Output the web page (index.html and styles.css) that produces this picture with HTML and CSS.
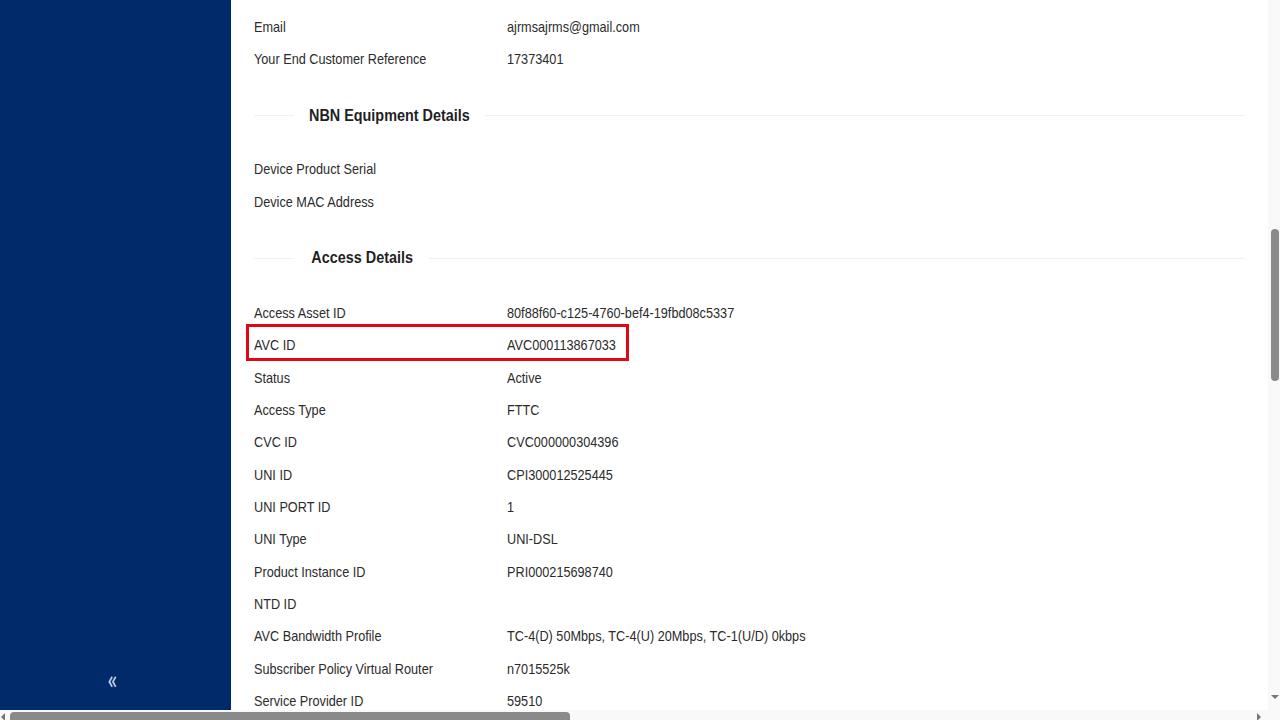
FILE: index.html
```html
<!DOCTYPE html>
<html lang="en">
<head>
<meta charset="utf-8">
<title>Service Details</title>
<link rel="stylesheet" href="styles.css">
</head>
<body>
<div class="app">
  <div class="frame">
    <aside class="sidebar">
      <div class="collapse">«</div>
    </aside>
    <main class="main">
      <div class="content">
        <div class="row"><span class="label"><span class="t">Email</span></span><span class="value"><span class="t">ajrmsajrms@gmail.com</span></span></div>
        <div class="row"><span class="label"><span class="t">Your End Customer Reference</span></span><span class="value"><span class="t">17373401</span></span></div>

        <div class="divider"><h2 class="divider-text"><span class="ht">NBN Equipment Details</span></h2></div>

        <div class="row"><span class="label"><span class="t">Device Product Serial</span></span><span class="value"></span></div>
        <div class="row"><span class="label"><span class="t">Device MAC Address</span></span><span class="value"></span></div>

        <div class="divider second"><h2 class="divider-text"><span class="ht">Access Details</span></h2></div>

        <div class="row"><span class="label"><span class="t">Access Asset ID</span></span><span class="value"><span class="t">80f88f60-c125-4760-bef4-19fbd08c5337</span></span></div>
        <div class="row highlighted"><span class="label"><span class="t">AVC ID</span></span><span class="value"><span class="t">AVC000113867033</span></span></div>
        <div class="row"><span class="label"><span class="t">Status</span></span><span class="value"><span class="t">Active</span></span></div>
        <div class="row"><span class="label"><span class="t">Access Type</span></span><span class="value"><span class="t">FTTC</span></span></div>
        <div class="row"><span class="label"><span class="t">CVC ID</span></span><span class="value"><span class="t">CVC000000304396</span></span></div>
        <div class="row"><span class="label"><span class="t">UNI ID</span></span><span class="value"><span class="t">CPI300012525445</span></span></div>
        <div class="row"><span class="label"><span class="t">UNI PORT ID</span></span><span class="value"><span class="t">1</span></span></div>
        <div class="row"><span class="label"><span class="t">UNI Type</span></span><span class="value"><span class="t">UNI-DSL</span></span></div>
        <div class="row"><span class="label"><span class="t">Product Instance ID</span></span><span class="value"><span class="t">PRI000215698740</span></span></div>
        <div class="row"><span class="label"><span class="t">NTD ID</span></span><span class="value"></span></div>
        <div class="row"><span class="label"><span class="t">AVC Bandwidth Profile</span></span><span class="value"><span class="t">TC-4(D) 50Mbps, TC-4(U) 20Mbps, TC-1(U/D) 0kbps</span></span></div>
        <div class="row"><span class="label"><span class="t">Subscriber Policy Virtual Router</span></span><span class="value"><span class="t">n7015525k</span></span></div>
        <div class="row"><span class="label"><span class="t">Service Provider ID</span></span><span class="value"><span class="t">59510</span></span></div>
      </div>
    </main>
    <div class="vscroll">
      <div class="vthumb"></div>
      <div class="arrow-down"></div>
    </div>
  </div>
  <div class="hscroll">
    <div class="arrow-left"></div>
    <div class="hthumb"></div>
    <div class="arrow-right"></div>
  </div>
</div>
</body>
</html>
```

FILE: styles.css
```css
html, body {
  margin: 0;
  padding: 0;
  background: #ffffff;
}

.app {
  width: 1280px;
  height: 720px;
  display: flex;
  flex-direction: column;
  overflow: hidden;
  font-family: "Liberation Sans", Arial, sans-serif;
  color: #2b2b2b;
}

.frame {
  flex: 1;
  display: flex;
  min-height: 0;
}

.sidebar {
  width: 231px;
  flex: none;
  background: #002a6a;
  display: flex;
  flex-direction: column;
  justify-content: flex-end;
  align-items: center;
  padding-bottom: 19px;
  box-sizing: border-box;
}

.collapse {
  color: #c9d3ea;
  font-family: Lato, sans-serif;
  font-size: 24px;
  line-height: 24px;
  margin-left: -6px;
  transform: scaleY(1.15);
}

.main {
  flex: 1;
  min-width: 0;
  overflow: hidden;
  background: #ffffff;
}

.content {
  padding: 10px 0 0 23px;
  width: 991px;
}

.row {
  display: flex;
  height: 32.33px;
  align-items: center;
  font-size: 15px;
  position: relative;
}

.label {
  width: 253px;
  flex: none;
}

.value {
  flex: 1;
}

.t {
  display: inline-block;
  white-space: nowrap;
  transform: scaleX(0.846);
  transform-origin: left center;
}

.row.highlighted::after {
  content: "";
  position: absolute;
  left: -8px;
  top: -5px;
  width: 377px;
  height: 31px;
  border: 3px solid #e30613;
}

.divider {
  display: flex;
  align-items: center;
  height: 32px;
  margin: 25px 0 21px;
  background: linear-gradient(#f0f0f0, #f0f0f0) no-repeat 0 50% / 100% 1px;
}

.divider.second {
  margin-bottom: 22px;
}

.divider-text {
  margin: 0 0 0 40px;
  font-size: 17px;
  font-weight: bold;
  color: #1f1f1f;
  line-height: 32px;
}

.ht {
  display: inline-block;
  white-space: nowrap;
  background: #ffffff;
  padding: 0 18px 0 17.7px;
  transform: scaleX(0.847);
  transform-origin: left center;
}

.second .ht {
  padding-left: 20.5px;
}

.vscroll {
  width: 12px;
  flex: none;
  background: #f9f9f9;
  position: relative;
}

.vthumb {
  position: absolute;
  left: 3px;
  top: 229px;
  width: 8px;
  height: 152px;
  border-radius: 4px;
  background: #8a8a8a;
}

.arrow-down {
  position: absolute;
  left: 3px;
  top: 695px;
  width: 0;
  height: 0;
  border-left: 4px solid transparent;
  border-right: 4px solid transparent;
  border-top: 4px solid #777;
}

.hscroll {
  height: 10px;
  flex: none;
  background: #f9f9f9;
  position: relative;
}

.hthumb {
  position: absolute;
  left: 10px;
  top: 2px;
  width: 560px;
  height: 8px;
  border-radius: 4px 4px 0 0;
  background: #8a8a8a;
}

.arrow-left {
  position: absolute;
  left: 1px;
  top: 3px;
  width: 0;
  height: 0;
  border-top: 4px solid transparent;
  border-bottom: 4px solid transparent;
  border-right: 4px solid #777;
}

.arrow-right {
  position: absolute;
  left: 1257px;
  top: 3px;
  width: 0;
  height: 0;
  border-top: 4px solid transparent;
  border-bottom: 4px solid transparent;
  border-left: 4px solid #777;
}
```
